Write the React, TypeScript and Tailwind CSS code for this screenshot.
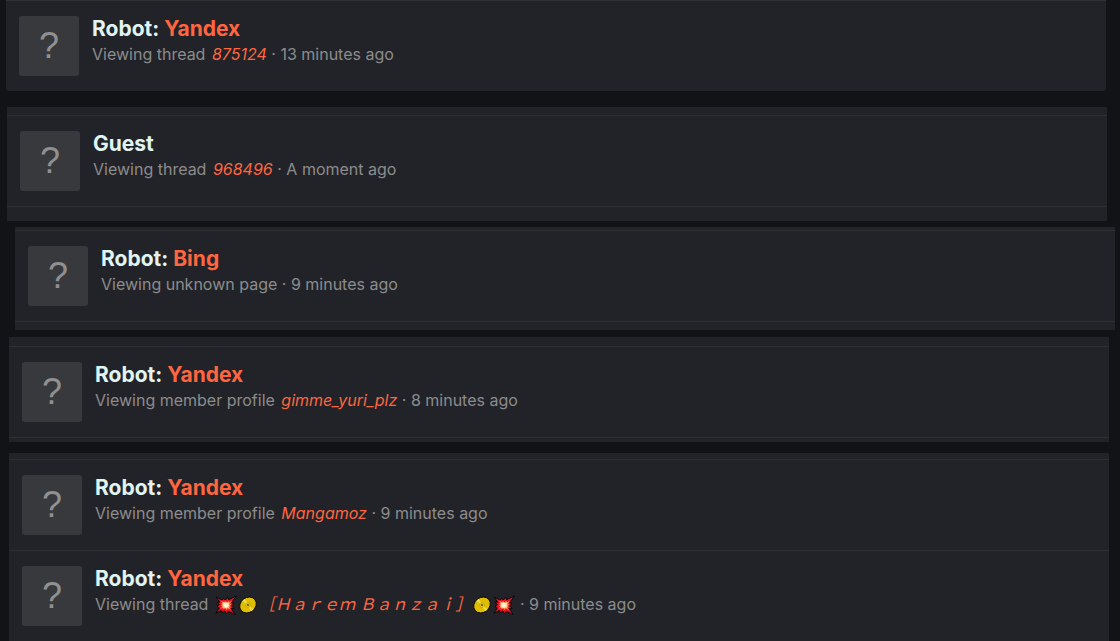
import type { ReactNode } from "react";
import clsx from "clsx";

type Activity = {
  robot?: string;
  action: string;
  target?: ReactNode;
  time: string;
};

type Group = {
  className: string;
  rows: Activity[];
  tail?: string;
};

const Boom = () => (
  <svg viewBox="0 0 22 20" className="inline-block h-5 w-[22px] align-[-5px]" role="img" aria-label="collision">
    <path
      d="M1 2 7 5 8.8 3.5l1.5 1.5 2.4-2.7.9 2.4L21.4 1l-4.9 6.6 2.6 1.3-2.5 1.9 2.5 2.6-3 .2 4 5.8-6.8-3-2 2-1.6-2.4-2.8 1.6-.5-2.3L.9 18.4l3.4-5.5-2.3-1.7 2.4-1.6L1.8 7.3l3-.2z"
      fill="#e81224"
      stroke="#050505"
      strokeWidth=".9"
      strokeLinejoin="round"
    />
    <path
      d="M5.2 5.2 8.8 7l1.4-1.1 1.3 1.3 2-1.4.3 1.7 3.2-1.9-2.1 3.1 1.4.8-1.5 1.2 1.2 1.6-1.7.2 1.5 2.4-3-1.3-1.3 1.3-1.2-1.6-1.9 1-.3-1.7-2.7 1.6 1.8-2.9-1.5-.8 1.6-1.2-1.2-1.4 1.8-.2z"
      fill="#f7894a"
    />
    <path
      d="m7.4 7 2.2.9 1.2-.9 1.1 1.2 2.4-1-1 2 1.2 1-1.3.9.8 1.8-1.9-.7-1.1 1.4-1.3-1.4-1.9.6.9-1.8-1.3-.9 1.2-.9z"
      fill="#fff6cf"
    />
  </svg>
);

const Disc = () => (
  <svg viewBox="0 0 22 20" className="inline-block h-5 w-[22px] align-[-5px]" role="img" aria-label="disc">
    <g transform="rotate(-38 11 10)">
      <ellipse cx="11" cy="10" rx="8.8" ry="7.4" fill="#dfbd00" stroke="#050505" strokeWidth=".9" />
      <path d="M11 10 9.2 3.3a8 7 0 0 1 3.4 0z" fill="#f0da45" />
      <path d="m11 10 1.8 6.7a8 7 0 0 1-3.4 0z" fill="#f0da45" />
      <ellipse cx="11" cy="10" rx="2.5" ry="2.1" fill="#e3c61c" stroke="#b59800" strokeWidth=".5" />
      <circle cx="11" cy="10" r=".8" fill="#111" />
    </g>
  </svg>
);

const groups: Group[] = [
  {
    className: "ml-[6px] mr-[14px] rounded-b-[3px]",
    rows: [{ robot: "Yandex", action: "Viewing thread", target: "875124", time: "13 minutes ago" }],
  },
  {
    className: "ml-[7px] mr-[13px] mt-4 pt-2",
    rows: [{ action: "Viewing thread", target: "968496", time: "A moment ago" }],
    tail: "h-[15px]",
  },
  {
    className: "ml-[15px] mr-[5px] mt-[6px] pt-[3px]",
    rows: [{ robot: "Bing", action: "Viewing unknown page", time: "9 minutes ago" }],
    tail: "h-[9px]",
  },
  {
    className: "ml-[9px] mr-[11px] mt-[7px] pt-[9px]",
    rows: [{ robot: "Yandex", action: "Viewing member profile", target: "gimme_yuri_plz", time: "8 minutes ago" }],
    tail: "h-[5px]",
  },
  {
    className: "ml-[9px] mr-[11px] mt-[11px] pt-[6px]",
    rows: [
      { robot: "Yandex", action: "Viewing member profile", target: "Mangamoz", time: "9 minutes ago" },
      {
        robot: "Yandex",
        action: "Viewing thread",
        target: (
          <>
            <Boom />
            <Disc />
            ［Ｈａｒｅｍ Ｂａｎｚａｉ］
            <Disc />
            <Boom />
          </>
        ),
        time: "9 minutes ago",
      },
    ],
  },
];

const ActivityRow = ({ robot, action, target, time }: Activity) => (
  <li className="flex gap-[13px] border-t border-[#2e2f33] py-[15px] pl-[13px] pr-4">
    <div className="flex size-[60px] shrink-0 items-center justify-center rounded-[3px] bg-[#38393c] font-['Liberation_Sans',sans-serif] text-4xl text-[#909090]">
      ?
    </div>
    <div className="min-w-0">
      <h3 className="text-[21px] leading-[26px] font-bold text-[#e0f5f3]">
        {robot ? (
          <>
            Robot: <a href="#robot" className="text-[#ff6640]">{robot}</a>
          </>
        ) : (
          "Guest"
        )}
      </h3>
      <p className="text-base leading-6 text-[#8c8c8c]">
        {action}{" "}
        {target && (
          <>
            <a href="#target" className="ml-0.5 text-[#ff6640] italic">{target}</a>{" "}
          </>
        )}
        · <time>{time}</time>
      </p>
    </div>
  </li>
);

const App = () => {
  return (
    <main className="min-h-screen bg-[#121317] font-['Inter','Noto_Sans_CJK_JP',sans-serif]">
      {/* flow-root keeps the first group's margin inside */}
      <div className="flow-root">
        {groups.map((group, index) => (
          <section key={index} className={clsx("bg-[#222328]", group.className)}>
            <ul>
              {group.rows.map((row, rowIndex) => (
                <ActivityRow key={rowIndex} {...row} />
              ))}
            </ul>
            {group.tail && <div className={clsx("border-t border-[#2e2f33]", group.tail)} />}
          </section>
        ))}
      </div>
    </main>
  );
};

export default App;
